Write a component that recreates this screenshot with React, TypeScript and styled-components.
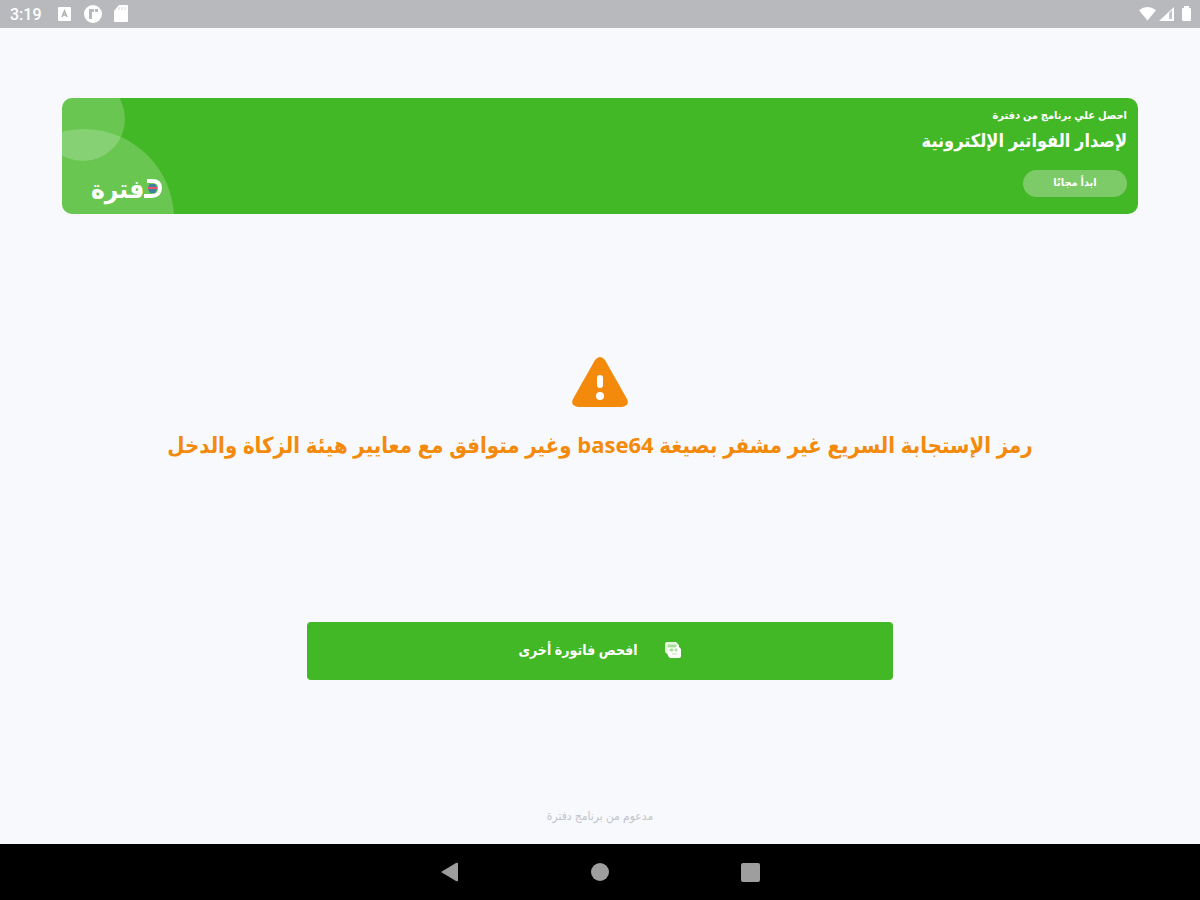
import React from "react";
import styled, { createGlobalStyle } from "styled-components";

const GlobalStyle = createGlobalStyle`
  * { box-sizing: border-box; }
  body { margin: 0; background: #f8f9fd; }
  body, button { font-family: "Open Sans", "DejaVu Sans Condensed", "DejaVu Sans", sans-serif; }
`;

const Screen = styled.div`
  display: flex;
  flex-direction: column;
  min-height: 100vh;
`;

const StatusBar = styled.header`
  display: flex;
  justify-content: space-between;
  align-items: center;
  height: 28px;
  padding: 0 6px 0 10px;
  background: #b8b9bd;
  color: #fff;
`;

const StatusGroup = styled.div<{ $gap: number }>`
  display: flex;
  align-items: center;
  gap: ${(p) => p.$gap}px;
`;

const Clock = styled.span`
  font: 500 16px/28px Roboto, sans-serif;
  padding-top: 2px;
  padding-right: 4px;
`;

const Content = styled.main`
  flex: 1;
  display: flex;
  flex-direction: column;
  align-items: center;
  padding: 70px 62px 16px;
`;

const Banner = styled.section`
  position: relative;
  display: flex;
  justify-content: space-between;
  align-items: flex-end;
  align-self: stretch;
  min-height: 116px;
  padding: 8px 11px 8px 29px;
  border-radius: 10px;
  background: #43b826;
  color: #fff;
  overflow: hidden;
`;

const Bubbles = styled.svg`
  position: absolute;
  left: 0;
  top: 0;
`;

const Pitch = styled.div`
  display: flex;
  flex-direction: column;
  align-items: flex-start;
  align-self: flex-start;
`;

const PitchLead = styled.p`
  margin: 0;
  font-size: 11px;
  line-height: 18px;
  font-weight: 700;
`;

const PitchTitle = styled.h1`
  margin: 0 0 14px;
  font-size: 18px;
  line-height: 32px;
  font-weight: 700;
`;

const PillButton = styled.button`
  width: 104px;
  height: 27px;
  padding: 0 0 4px;
  border: 0;
  border-radius: 14px;
  background: #7dca69;
  color: #fff;
  font-size: 11px;
  font-weight: 700;
`;

const Brand = styled.div`
  position: relative;
  display: flex;
  align-items: center;
  font-size: 26px;
  line-height: 36px;
  font-weight: 700;
`;

const Notice = styled.section`
  display: flex;
  flex-direction: column;
  align-items: center;
  gap: 17px;
  margin: 143px 0 158px;
`;

const NoticeText = styled.p`
  margin: 0;
  color: #f48a0b;
  font-size: 22px;
  line-height: 40px;
  font-weight: 700;
  text-align: center;
`;

const ScanButton = styled.button`
  display: flex;
  align-items: center;
  justify-content: center;
  gap: 26px;
  width: 54.4%;
  min-height: 58px;
  padding: 0 0 3px;
  border: 0;
  border-radius: 4px;
  background: #43b826;
  color: #fff;
  font-size: 14px;
  font-weight: 700;
`;

const Credit = styled.footer`
  margin-top: auto;
  color: #c3c4c8;
  font-size: 12px;
  line-height: 24px;
`;

const NavBar = styled.nav`
  display: flex;
  justify-content: center;
  align-items: center;
  gap: 122px;
  height: 56px;
  background: #000;
`;

const NavButton = styled.button`
  display: flex;
  width: 28px;
  height: 28px;
  padding: 0;
  border: 0;
  background: none;
`;

export default function App() {
  return (
    <Screen>
      <GlobalStyle />
      <StatusBar>
        <StatusGroup $gap={11}>
          <Clock>3:19</Clock>
          <svg width="16" height="16" viewBox="0 0 16 16" aria-hidden="true">
            <rect x="1" y="1" width="13" height="14" rx="1" fill="#fff" />
            <path d="M5 11 7.500 5 10 11M6 9h3" fill="none" stroke="#b0b1b5" strokeWidth="1.500" />
          </svg>
          <svg width="18" height="18" viewBox="0 0 18 18" aria-hidden="true">
            <circle cx="9" cy="9" r="9" fill="#fff" />
            <path d="M5 4h5v3H8v7H5zM11 4h3v3h-3z" fill="#b8b9bd" />
          </svg>
          <svg width="16" height="18" viewBox="0 0 16 18" aria-hidden="true">
            <path d="M6 0h8a1 1 0 0 1 1 1v15a1 1 0 0 1-1 1H2a1 1 0 0 1-1-1V6z" fill="#fff" />
            <path d="M6 2v3M9 2v3M12 2v3" stroke="#d5d6d9" />
          </svg>
        </StatusGroup>
        <StatusGroup $gap={3}>
          <svg width="17" height="16" viewBox="0 0 18 16" aria-hidden="true">
            <path d="M0 4Q9-3 18 4L9 15z" fill="#fff" />
          </svg>
          <svg width="16" height="16" viewBox="0 0 16 16" aria-hidden="true">
            <path d="M0 15 15 1v14z" fill="#fff" />
            <path d="M10 7v6h3V4z" fill="#c4c5c9" />
          </svg>
          <svg width="16" height="16" viewBox="0 0 16 16" aria-hidden="true">
            <path d="M6 0h5v2h1a1 1 0 0 1 1 1v11a1 1 0 0 1-1 1H5a1 1 0 0 1-1-1V3a1 1 0 0 1 1-1h1z" fill="#fff" />
          </svg>
        </StatusGroup>
      </StatusBar>

      <Content lang="ar">
        <Banner>
          <Bubbles width="114" height="116" aria-hidden="true">
            <circle cx="21" cy="21" r="42" fill="#fff" fillOpacity="0.2" />
            <circle cx="22" cy="121" r="90" fill="#fff" fillOpacity="0.2" />
          </Bubbles>
          <Brand dir="rtl">
            <svg width="18" height="22" viewBox="0 0 18 22" aria-hidden="true">
              <path d="M6 7h5l2 3H4z" fill="#3f7fa0" />
              <path d="M4 12h9l-2 4H6z" fill="#3f7fa0" />
              <path d="M4 10h9v2H4z" fill="#f0506e" />
              <path d="M3 4h5c5 0 8 2 8 7s-3 8-8 8H0" fill="none" stroke="#fff" strokeWidth="4" />
            </svg>
            <span>فترة</span>
          </Brand>
          <Pitch dir="rtl">
            <PitchLead>احصل علي برنامج من دفترة</PitchLead>
            <PitchTitle>لإصدار الفواتير الإلكترونية</PitchTitle>
            <PillButton type="button">ابدأ مجانًا</PillButton>
          </Pitch>
        </Banner>

        <Notice dir="rtl">
          <svg width="56" height="50" viewBox="0 0 56 50" aria-hidden="true">
            <path d="M23 3Q28-3 33 3L55 42Q58 49 50 50H6Q-2 49 1 42z" fill="#f48a0b" />
            <rect x="25" y="18" width="6" height="13" rx="3" fill="#fff" />
            <circle cx="28" cy="39" r="4" fill="#fff" />
          </svg>
          <NoticeText>
            رمز الإستجابة السريع غير مشفر بصيغة base64 وغير متوافق مع معايير هيئة الزكاة والدخل
          </NoticeText>
        </Notice>

        <ScanButton type="button" dir="rtl">
          <svg width="18" height="18" viewBox="0 0 18 18" aria-hidden="true">
            <path d="M3 1h9l3 3v9a1 1 0 0 1-1 1H4L1 11V3a2 2 0 0 1 2-2z" fill="#e3f5de" />
            <path d="M6 5h8l3 3v7a2 2 0 0 1-2 2H6l-2-2V7z" fill="#fff" />
            <path d="M4 4h8v2H4zM6 8h3v2H6zM11 8h2v2h-2zM8 13h5" fill="#8ed27c" stroke="#b9e4ad" strokeWidth="1" />
          </svg>
          <span>افحص فاتورة أخرى</span>
        </ScanButton>

        <Credit dir="rtl">مدعوم من برنامج دفترة</Credit>
      </Content>

      <NavBar>
        <NavButton type="button" aria-label="Back">
          <svg width="28" height="28" viewBox="0 0 28 28">
            <path d="M5 14 20 5q2-1 2 1v16q0 2-2 1z" fill="#9e9e9e" />
          </svg>
        </NavButton>
        <NavButton type="button" aria-label="Home">
          <svg width="28" height="28" viewBox="0 0 28 28">
            <circle cx="14" cy="14" r="9" fill="#9e9e9e" />
          </svg>
        </NavButton>
        <NavButton type="button" aria-label="Recent apps">
          <svg width="28" height="28" viewBox="0 0 28 28">
            <rect x="5" y="5" width="19" height="19" rx="2" fill="#9e9e9e" />
          </svg>
        </NavButton>
      </NavBar>
    </Screen>
  );
}
